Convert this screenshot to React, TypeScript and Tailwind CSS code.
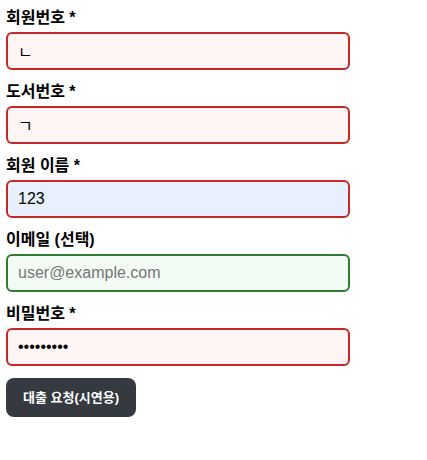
const fields = [
  { label: '회원번호 *', value: 'ㄴ', type: 'text', tone: 'bad' },
  { label: '도서번호 *', value: 'ㄱ', type: 'text', tone: 'bad' },
  { label: '회원 이름 *', value: '123', type: 'text', tone: 'fill' },
  { label: '이메일 (선택)', value: '', type: 'email', tone: 'ok', placeholder: 'user@example.com' },
  { label: '비밀번호 *', value: 'abcdefghi', type: 'password', tone: 'bad' },
];

const toneClass: Record<string, string> = {
  bad: 'border-[#c62828] bg-[#fff5f5]',
  fill: 'border-[#c62828] bg-[#e8f0fe]',
  ok: 'border-[#2e7d32] bg-[#f3fbf5]',
};

export default function App() {
  return (
    <div className="pt-2 px-[6px] font-['Liberation_Sans','Noto_Sans_CJK_KR',sans-serif] text-black">
      <form className="flex flex-col w-[344px]" onSubmit={(e) => e.preventDefault()}>
        {fields.map((f) => (
          <div key={f.label} className="flex flex-col mb-3">
            <label className="text-[16px] font-bold leading-5 mb-1">{f.label}</label>
            <input
              type={f.type}
              defaultValue={f.value}
              placeholder={f.placeholder}
              className={`h-[38px] rounded-md border-2 px-[10px] text-base outline-none placeholder:text-[#757575] ${toneClass[f.tone]}`}
            />
          </div>
        ))}
        <div>
          <button className="h-[39px] rounded-lg bg-[#343a40] px-[17px] text-[13px] font-bold text-white">
            대출 요청(시연용)
          </button>
        </div>
      </form>
    </div>
  );
}
